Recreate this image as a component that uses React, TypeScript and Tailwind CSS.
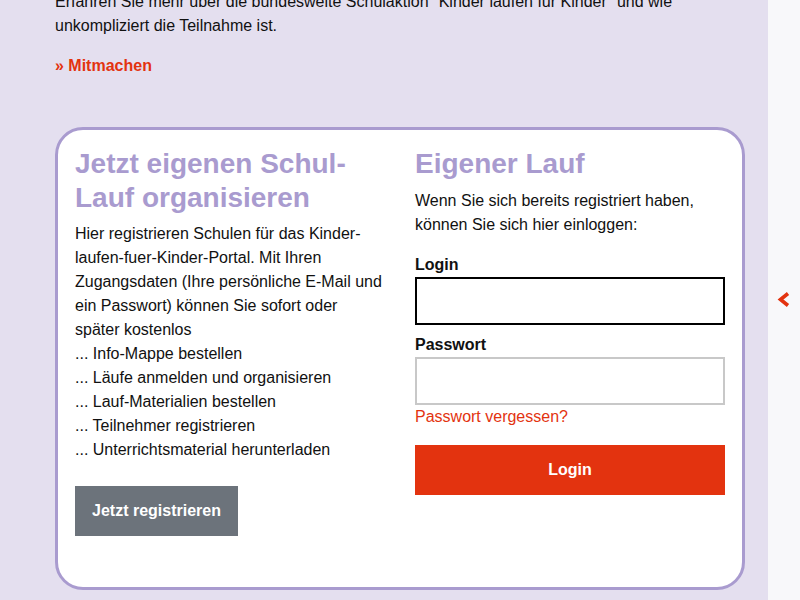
import React from "react";

const features = [
  "Info-Mappe bestellen",
  "Läufe anmelden und organisieren",
  "Lauf-Materialien bestellen",
  "Teilnehmer registrieren",
  "Unterrichtsmaterial herunterladen",
];

export default function App() {
  return (
    <div className="flex w-[800px] h-[600px] overflow-hidden font-['Liberation_Sans',Arial,sans-serif] text-[16px] leading-6 text-[#111]">
      {/* main column */}
      <div className="w-[768px] shrink-0 bg-[#e4dfef] pl-[55px] pr-[23px]">
        <p className="-mt-[10px]">
          Erfahren Sie mehr über die bundesweite Schulaktion "Kinder laufen für Kinder" und wie
          unkompliziert die Teilnahme ist.
        </p>
        <a className="block mt-4 font-bold text-[#e3330f]">» Mitmachen</a>

        {/* login card */}
        <div className="mt-[49px] h-[463px] rounded-[28px] border-[3px] border-[#a99bcf] bg-white px-[17px] pt-[17px]">
          <div className="grid grid-cols-2 gap-[30px]">
            <div>
              <h2 className="text-[28px] leading-[34px] font-bold text-[#a99bcf]">
                Jetzt eigenen Schul-Lauf organisieren
              </h2>
              <p className="mt-[7px]">
                Hier registrieren Schulen für das Kinder-laufen-fuer-Kinder-Portal. Mit Ihren
                Zugangsdaten (Ihre persönliche E-Mail und ein Passwort) können Sie sofort oder
                später kostenlos
              </p>
              <ul>
                {features.map((f) => (
                  <li key={f}>... {f}</li>
                ))}
              </ul>
              <button className="mt-6 h-[50px] px-[17px] bg-[#6c737b] text-white font-bold">
                Jetzt registrieren
              </button>
            </div>

            <div>
              <h2 className="text-[28px] leading-[34px] font-bold text-[#a99bcf]">Eigener Lauf</h2>
              <p className="mt-2">
                Wenn Sie sich bereits registriert haben, können Sie sich hier einloggen:
              </p>
              <label className="block mt-4 font-bold">Login</label>
              <input className="block w-full h-[48px] border-2 border-black bg-white outline-none" />
              <label className="block mt-2 font-bold">Passwort</label>
              <input
                type="password"
                className="block w-full h-[48px] border-2 border-[#c8c8c8] bg-white outline-none"
              />
              <a className="block text-[#e3330f]">Passwort vergessen?</a>
              <button className="mt-4 w-full h-[50px] bg-[#e3330f] text-white font-bold">Login</button>
            </div>
          </div>
        </div>
      </div>

      {/* sidebar */}
      <div className="flex-1 bg-[#f8f8fa] relative">
        <svg className="absolute left-[9px] top-[292px]" width="14" height="15" viewBox="0 0 14 15">
          <path d="M11 1.5 L3.5 7.5 L11 13.5" fill="none" stroke="#e3330f" strokeWidth="3.6" />
        </svg>
      </div>
    </div>
  );
}
